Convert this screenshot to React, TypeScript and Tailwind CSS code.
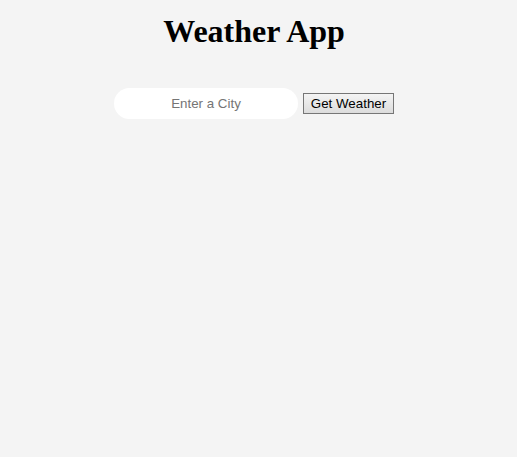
export default function App() {
  return (
    <div className="min-h-screen w-full bg-[#f4f4f4]">
      <div className="flex w-[508px] flex-col items-center">
        <h1 className="mt-[13px] h-[37px] text-[32px] font-bold leading-[37px] text-black" style={{ fontFamily: '"Liberation Serif", "Times New Roman", serif' }}>
          Weather App
        </h1>
        <div className="mt-[38px] flex items-center">
          <input
            type="text"
            placeholder="Enter a City"
            className="h-[31px] w-[184px] rounded-full border-0 bg-white px-2 text-center text-[13.333px] text-black outline-none placeholder:text-[#757575]"
            style={{ fontFamily: '"Liberation Sans", Arial, sans-serif' }}
          />
          <button
            className="ml-[5px] flex h-[21px] w-[91px] items-center justify-center border border-[#767676] bg-gradient-to-b from-[#f4f4f4] to-[#dcdcdc] text-[13.333px] leading-none text-black"
            style={{ fontFamily: '"Liberation Sans", Arial, sans-serif' }}
          >
            Get Weather
          </button>
        </div>
      </div>
    </div>
  );
}
